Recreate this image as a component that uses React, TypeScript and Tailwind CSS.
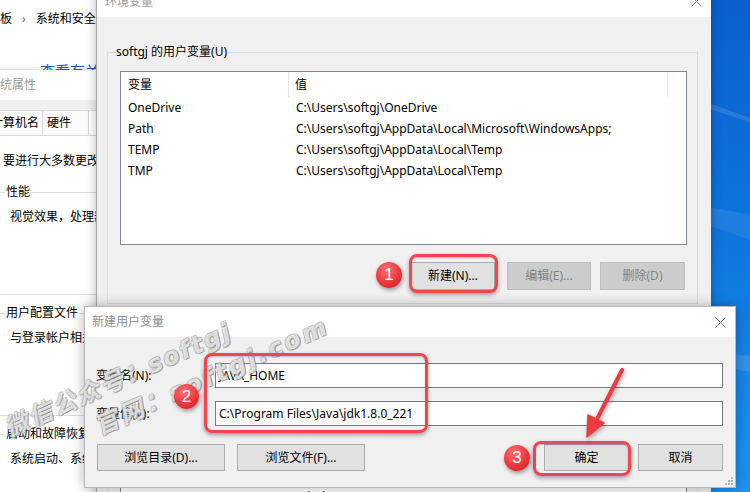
import React from 'react'

const userVars: [string, string][] = [
  ['OneDrive', 'C:\\Users\\softgj\\OneDrive'],
  ['Path', 'C:\\Users\\softgj\\AppData\\Local\\Microsoft\\WindowsApps;'],
  ['TEMP', 'C:\\Users\\softgj\\AppData\\Local\\Temp'],
  ['TMP', 'C:\\Users\\softgj\\AppData\\Local\\Temp'],
]

const systemVars: [string, string][] = [
  ['ComSpec', 'C:\\Windows\\system32\\cmd.exe'],
  ['DriverData', 'C:\\Windows\\System32\\Drivers\\DriverData'],
  ['NUMBER_OF_PROCESSORS', '4'],
  ['OS', 'Windows_NT'],
]

function CloseGlyph() {
  return (
    <svg width="11" height="11" viewBox="0 0 11 11" className="block">
      <path d="M0.5 0.5 L10.5 10.5 M10.5 0.5 L0.5 10.5" stroke="#7d7d7d" strokeWidth="1" fill="none" />
    </svg>
  )
}

function Btn({
  children,
  disabled = false,
  className = '',
}: {
  children: React.ReactNode
  disabled?: boolean
  className?: string
}) {
  return (
    <div
      className={`flex items-center justify-center border whitespace-nowrap ${
        disabled ? 'bg-[#cccccc] border-[#bfbfbf] text-[#838383]' : 'bg-[#e1e1e1] border-[#adadad] text-black'
      } ${className}`}
    >
      {children}
    </div>
  )
}

function VarList({ rows, height }: { rows: [string, string][]; height: string }) {
  return (
    <div className={`bg-white border border-[#828790] overflow-hidden ${height}`}>
      <div className="flex h-[25px]">
        <div className="w-[168px] pl-[7px] flex items-center border-r border-[#e5e5e5]">变量</div>
        <div className="w-[379px] pl-[6px] flex items-center border-r border-[#e5e5e5]">值</div>
      </div>
      {rows.map(([k, v]) => (
        <div key={k} className="flex h-[21px] items-center whitespace-nowrap">
          <div className="w-[168px] shrink-0 pl-[7px]">{k}</div>
          <div className="pl-[7px]">{v}</div>
        </div>
      ))}
    </div>
  )
}

function Desktop() {
  return (
    <div className="absolute left-[700px] top-0 w-[50px] h-[492px]">
      <svg width="50" height="492" viewBox="0 0 50 492" className="block">
        <defs>
          <linearGradient id="wall" x1="0" y1="0" x2="0" y2="1">
            <stop offset="0" stopColor="#0a5fcf" />
            <stop offset="0.45" stopColor="#0c74dd" />
            <stop offset="1" stopColor="#1f92f2" />
          </linearGradient>
        </defs>
        <rect width="50" height="492" fill="url(#wall)" />
        <path d="M0 100 L50 118 L50 122 L0 106 Z" fill="#ffffff" opacity="0.12" />
        <path d="M0 205 L50 215 L50 240 L0 222 Z" fill="#ffffff" opacity="0.08" />
        <path d="M0 350 L50 356 L50 372 L0 362 Z" fill="#ffffff" opacity="0.12" />
      </svg>
    </div>
  )
}

function ControlPanel() {
  return (
    <div className="absolute left-0 top-0 w-[110px] h-[90px] bg-white">
      <div className="flex items-center h-[16px] mt-[11px] ml-[-36px] whitespace-nowrap">
        <span>控制面板</span>
        <span className="ml-[10px] text-[#666]">›</span>
        <span className="ml-[10px]">系统和安全</span>
      </div>
      <div className="mt-[35px] ml-[40px] text-[15px] leading-[18px] text-[#1f5bb5] whitespace-nowrap">
        查看有关计算机的基本信息
      </div>
    </div>
  )
}

function SystemProperties() {
  return (
    <div className="absolute left-[-22px] top-[70px] w-[140px] h-[480px] bg-[#f0f0f0] flex flex-col shadow-[0_-1px_5px_rgba(0,0,0,0.18)]">
      <div className="h-[30px] shrink-0 bg-white flex items-center pl-[10px] text-[#9a9a9a] whitespace-nowrap">系统属性</div>
      <div className="flex-1 pt-[10px] pl-[6px] flex flex-col">
        <div className="flex h-[25px] shrink-0 whitespace-nowrap">
          <div className="w-[59px] shrink-0 bg-[#fafafa] border border-b-0 border-[#d9d9d9] pl-[6px] flex items-center">计算机名</div>
          <div className="w-[46px] shrink-0 bg-[#fafafa] border border-l-0 border-b-0 border-[#d9d9d9] pl-[4px] flex items-center">硬件</div>
          <div className="w-[60px] shrink-0 bg-white border border-l-0 border-b-0 border-[#d9d9d9] pl-[22px] flex items-center">高级</div>
        </div>
        <div className="flex-1 bg-white border border-[#d9d9d9] pt-[17px] whitespace-nowrap">
          <div className="h-[16px] leading-[16px] pl-[18px]">要进行大多数更改，你必须作为管理员登录。</div>
          <fieldset className="mt-[15px] ml-[9px] h-[111px] border border-[#dcdcdc]">
            <legend className="ml-[10px] px-[1px] leading-[16px]">性能</legend>
            <div className="mt-[9px] pl-[15px] leading-[16px]">视觉效果，处理器计划，内存使用，以及虚拟内存</div>
          </fieldset>
          <fieldset className="mt-[10px] ml-[9px] h-[111px] border border-[#dcdcdc]">
            <legend className="ml-[10px] px-[1px] leading-[16px]">用户配置文件</legend>
            <div className="mt-[9px] pl-[15px] leading-[16px]">与登录帐户相关的桌面设置</div>
          </fieldset>
          <fieldset className="mt-[10px] ml-[9px] h-[111px] border border-[#dcdcdc]">
            <legend className="ml-[10px] px-[1px] leading-[16px]">启动和故障恢复</legend>
            <div className="mt-[9px] pl-[15px] leading-[16px]">系统启动、系统故障和调试信息</div>
          </fieldset>
        </div>
      </div>
    </div>
  )
}

function EnvDialog() {
  return (
    <div className="absolute left-[96px] top-[-14px] w-[615px] h-[520px] flex flex-col bg-[#f0f0f0] border-l border-[#a8a8a8] shadow-[0_0_10px_rgba(0,0,0,0.28)]">
      <div className="h-[31px] shrink-0 bg-white flex items-center justify-between pl-[8px] pr-[9px]">
        <span className="text-[#9a9a9a]">环境变量</span>
        <CloseGlyph />
      </div>
      <div className="flex-1 pl-[10px] pr-[13px] pt-[27px]">
        <fieldset className="border border-[#dcdcdc]">
          <legend className="ml-[8px] leading-[16px]">softgj 的用户变量(U)</legend>
          <div className="pl-[12px] pr-[10px] pb-[13px]">
            <div className="mt-[11px]">
              <VarList rows={userVars} height="h-[174px]" />
            </div>
            <div className="flex justify-end mt-[17px] pr-[2px]">
              <Btn className="w-[84px] h-[28px]">新建(N)...</Btn>
              <Btn disabled className="w-[84px] h-[28px] ml-[12px]">编辑(E)...</Btn>
              <Btn disabled className="w-[85px] h-[28px] ml-[9px]">删除(D)</Btn>
            </div>
          </div>
        </fieldset>
        <fieldset className="mt-[74px] border border-[#dcdcdc]">
          <legend className="ml-[8px] leading-[16px]">系统变量(S)</legend>
          <div className="pl-[12px] pr-[10px] pb-[13px]">
            <div className="mt-[3px]">
              <VarList rows={systemVars} height="h-[174px]" />
            </div>
          </div>
        </fieldset>
      </div>
    </div>
  )
}

function NewVarDialog() {
  return (
    <div className="absolute left-[84px] top-[306px] w-[652px] h-[182px] flex flex-col bg-[#f0f0f0] border border-[#b9b9b9] shadow-[0_0_12px_rgba(0,0,0,0.3)]">
      <div className="h-[30px] shrink-0 bg-white flex items-center justify-between pl-[7px] pr-[9px]">
        <span className="text-[#8e8e8e]">新建用户变量</span>
        <CloseGlyph />
      </div>
      <div className="relative flex-1 pt-[26px] pl-[11px] pr-[12px]">
        <div className="flex items-center">
          <div className="w-[119px]">变量名(N):</div>
          <div className="flex-1 h-[25px] bg-white border border-[#7a7a7a] pl-[3px] flex items-center">JAVA_HOME</div>
        </div>
        <div className="flex items-center mt-[13px]">
          <div className="w-[119px]">变量值(V):</div>
          <div className="flex-1 h-[25px] bg-white border border-[#7a7a7a] pl-[3px] flex items-center">
            C:\Program Files\Java\jdk1.8.0_221
          </div>
        </div>
        <div className="flex mt-[18px] pl-[1px]">
          <Btn className="w-[128px] h-[27px]">浏览目录(D)...</Btn>
          <Btn className="w-[128px] h-[27px] ml-[12px]">浏览文件(F)...</Btn>
          <div className="flex-1" />
          <Btn className="w-[85px] h-[27px]">确定</Btn>
          <Btn className="w-[85px] h-[27px] ml-[9px]">取消</Btn>
        </div>
        <svg width="8" height="8" viewBox="0 0 8 8" className="absolute right-[2px] bottom-[2px]">
          <rect x="6" y="0" width="2" height="2" fill="#b5b5b5" />
          <rect x="3" y="3" width="2" height="2" fill="#b5b5b5" />
          <rect x="6" y="3" width="2" height="2" fill="#b5b5b5" />
          <rect x="0" y="6" width="2" height="2" fill="#b5b5b5" />
          <rect x="3" y="6" width="2" height="2" fill="#b5b5b5" />
          <rect x="6" y="6" width="2" height="2" fill="#b5b5b5" />
        </svg>
      </div>
    </div>
  )
}

function Watermark() {
  const mark =
    "absolute origin-[0_50%] -rotate-[24deg] whitespace-nowrap text-[24px] leading-[28px] font-bold italic text-white/70 font-['DejaVu_Sans','Noto_Sans_CJK_SC',sans-serif] [text-shadow:1px_1px_0_rgba(120,120,120,0.6),-1px_-1px_0_rgba(170,170,170,0.5),1px_-1px_0_rgba(150,150,150,0.5),-1px_1px_0_rgba(150,150,150,0.5)]"
  return (
    <>
      <div className={`${mark} tracking-[2px] left-[6px] top-[416px]`}>微信公众号：softgj</div>
      <div className={`${mark} tracking-[3px] left-[96px] top-[414px]`}>官网：softgj.com</div>
    </>
  )
}

function Frame({ className }: { className: string }) {
  return (
    <div
      className={`absolute border-[3px] border-[#f0464c] rounded-[8px] shadow-[0_2px_4px_rgba(0,0,0,0.35),inset_0_1px_2px_rgba(0,0,0,0.2)] ${className}`}
    />
  )
}

function Marker({ n, className }: { n: string; className: string }) {
  return (
    <div
      className={`absolute rounded-full bg-[radial-gradient(circle_at_40%_30%,#ff7073,#e83238_60%,#c9242a)] shadow-[1px_2px_4px_rgba(0,0,0,0.4)] flex items-center justify-center text-white text-[17px] font-['Liberation_Sans',Arial,sans-serif] ${className}`}
    >
      {n}
    </div>
  )
}

function Annotations() {
  return (
    <>
      <Frame className="left-[409px] top-[254px] w-[89px] h-[39px]" />
      <Frame className="left-[204px] top-[353px] w-[224px] h-[80px]" />
      <Frame className="left-[533px] top-[441px] w-[98px] h-[35px]" />
      <Marker n="1" className="left-[376px] top-[262px] w-[26px] h-[26px]" />
      <Marker n="2" className="left-[174px] top-[384px] w-[25px] h-[25px]" />
      <Marker n="3" className="left-[504px] top-[445px] w-[26px] h-[26px]" />
      <svg width="60" height="90" viewBox="0 0 60 90" className="absolute left-[575px] top-[360px] drop-shadow-[1px_2px_2px_rgba(0,0,0,0.35)]">
        <path d="M47 10 L20 63" stroke="#ee3b41" strokeWidth="4" strokeLinecap="round" fill="none" />
        <path d="M12 77 L29 63 L13 55 Z" fill="#ee3b41" stroke="#ee3b41" strokeWidth="1.5" strokeLinejoin="round" />
      </svg>
    </>
  )
}

export default function App() {
  return (
    <div className="relative w-[750px] h-[492px] overflow-hidden bg-white text-[12px] leading-[16px] text-black font-['Noto_Sans','Noto_Sans_CJK_SC',sans-serif]">
      <Desktop />
      <ControlPanel />
      <SystemProperties />
      <EnvDialog />
      <NewVarDialog />
      <Watermark />
      <Annotations />
    </div>
  )
}
